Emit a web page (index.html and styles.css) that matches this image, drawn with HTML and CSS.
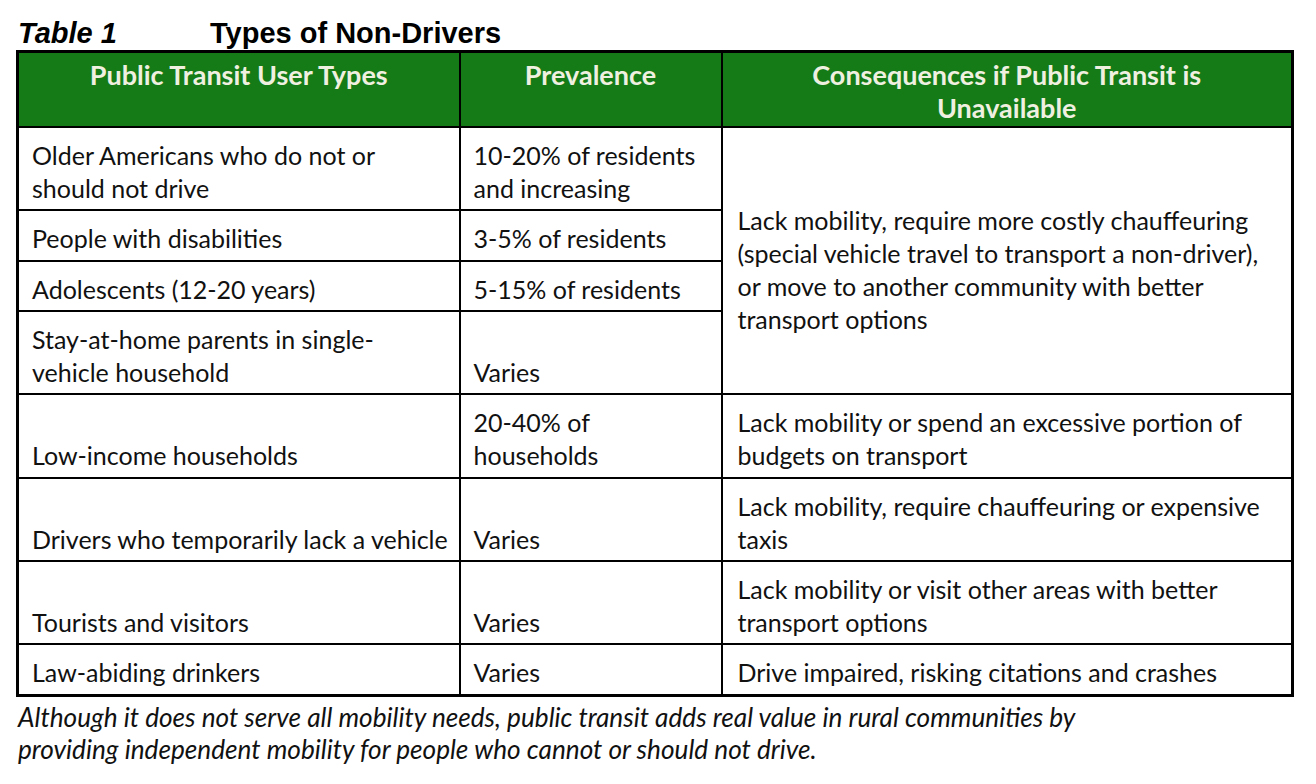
FILE: index.html
```html
<!DOCTYPE html>
<html lang="en">
<head>
<meta charset="utf-8">
<title>Types of Non-Drivers</title>
<link rel="stylesheet" href="styles.css">
</head>
<body>
<div class="page">
  <h1 class="title"><span class="title-num">Table 1</span><span class="title-text">Types of Non-Drivers</span></h1>
  <table class="grid">
    <colgroup>
      <col class="c1"><col class="c2"><col class="c3">
    </colgroup>
    <thead>
      <tr>
        <th>Public Transit User Types</th>
        <th>Prevalence</th>
        <th>Consequences if Public Transit is<br>Unavailable</th>
      </tr>
    </thead>
    <tbody>
      <tr>
        <td>Older Americans who do not or<br>should not drive</td>
        <td>10-20% of residents<br>and increasing</td>
        <td class="wide merged" rowspan="4">Lack mobility, require more costly chauffeuring<br>(special vehicle travel to transport a non-driver),<br>or move to another community with better<br>transport options</td>
      </tr>
      <tr>
        <td>People with disabilities</td>
        <td>3-5% of residents</td>
      </tr>
      <tr>
        <td>Adolescents (12-20 years)</td>
        <td>5-15% of residents</td>
      </tr>
      <tr>
        <td>Stay-at-home parents in single-<br>vehicle household</td>
        <td>Varies</td>
      </tr>
      <tr>
        <td>Low-income households</td>
        <td>20-40% of<br>households</td>
        <td class="wide">Lack mobility or spend an excessive portion of<br>budgets on transport</td>
      </tr>
      <tr>
        <td>Drivers who temporarily lack a vehicle</td>
        <td>Varies</td>
        <td class="wide">Lack mobility, require chauffeuring or expensive<br>taxis</td>
      </tr>
      <tr>
        <td>Tourists and visitors</td>
        <td>Varies</td>
        <td class="wide">Lack mobility or visit other areas with better<br>transport options</td>
      </tr>
      <tr>
        <td>Law-abiding drinkers</td>
        <td>Varies</td>
        <td class="wide">Drive impaired, risking citations and crashes</td>
      </tr>
    </tbody>
  </table>
  <p class="caption">Although it does not serve all mobility needs, public transit adds real value in rural communities by<br>providing independent mobility for people who cannot or should not drive.</p>
</div>
</body>
</html>
```

FILE: styles.css
```css
* { box-sizing: border-box; }
html, body { margin: 0; padding: 0; background: #ffffff; }
body { font-family: "Lato", "Open Sans", sans-serif; color: #111111; }

.page { padding: 0 0 0 16px; }

.title {
  margin: 0;
  height: 50px;
  padding-top: 18px;
  font-family: "Liberation Sans", Arial, sans-serif;
  font-weight: bold;
  font-size: 29px;
  line-height: 30px;
  color: #000;
  display: flex;
}
.title-num { font-style: italic; width: 194px; padding-left: 2px; }

.grid {
  width: 1275px;
  border-collapse: collapse;
  border: 3px solid #000;
  table-layout: fixed;
}
.c1 { width: 442px; }
.c2 { width: 262px; }
.c3 { width: 571px; }

.grid th {
  background: #147b17;
  color: #f0f0e0;
  font-weight: 700;
  font-size: 27px;
  line-height: 33px;
  text-align: center;
  vertical-align: top;
  padding: 5px 6px 2px;
  border: 2px solid #000;
  border-top: 3px solid #000;
}

.grid td {
  font-size: 25px;
  line-height: 33.2px;
  vertical-align: bottom;
  padding: 11px 6px 4px 13px;
  border: 2px solid #000;
  white-space: nowrap;
}
.grid td.wide { padding-left: 15px; }
.grid td.merged {
  vertical-align: middle;
  padding-top: 23px;
  padding-bottom: 4px;
}

.caption {
  margin: 4px 0 0 2px;
  font-style: italic;
  font-size: 26.2px;
  line-height: 32px;
  color: #111;
}
```
